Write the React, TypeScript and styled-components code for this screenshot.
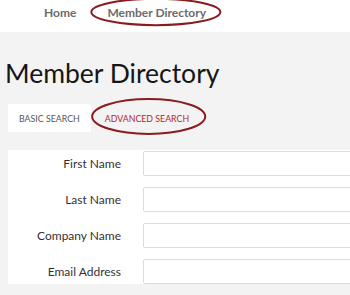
import React from "react";
import styled, { createGlobalStyle } from "styled-components";

const Global = createGlobalStyle`
  html, body { margin: 0; padding: 0; }
  body {
    font-family: Lato, "Open Sans", "Liberation Sans", sans-serif;
    background: #f3f3f3;
    overflow: hidden;
    width: 350px;
    height: 295px;
  }
`;

const Page = styled.div`
  width: 350px;
  height: 295px;
  overflow: hidden;
  background: #f3f3f3;
`;

const TopBar = styled.nav`
  height: 32px;
  background: #ffffff;
  display: flex;
  align-items: center;
  padding-left: 44px;
  gap: 31px;
  padding-bottom: 8px;
  box-sizing: border-box;
`;

const Crumb = styled.span`
  position: relative;
  font-size: 12px;
  font-weight: 700;
  color: #6b6b6b;
  white-space: nowrap;
`;

const Ring = styled.svg<{ $l: number; $r: number; $t: number; $b: number }>`
  position: absolute;
  left: ${(p) => -p.$l}px;
  top: ${(p) => -p.$t}px;
  width: calc(100% + ${(p) => p.$l + p.$r}px);
  height: calc(100% + ${(p) => p.$t + p.$b}px);
  overflow: visible;
  pointer-events: none;
`;

const Main = styled.main`
  padding: 26px 0 0 8px;
`;

const Title = styled.h1`
  margin: 0 0 14px -3px;
  font-size: 26.5px;
  font-weight: 400;
  line-height: 1.2;
  color: #161616;
  white-space: nowrap;
`;

const TabList = styled.div`
  display: flex;
  gap: 3px;
  height: 28px;
`;

const Tab = styled.div<{ $active?: boolean }>`
  position: relative;
  display: flex;
  align-items: center;
  padding: 1px 11px 0;
  font-size: 8.8px;
  text-transform: uppercase;
  white-space: nowrap;
  background: ${(p) => (p.$active ? "#ffffff" : "transparent")};
  color: ${(p) => (p.$active ? "#555555" : "#b3262b")};
  border-radius: 2px 2px 0 0;
`;

const TabText = styled.span`
  position: relative;
`;

const Panel = styled.form`
  margin-top: 18px;
  width: 420px;
  background: #ffffff;
  padding-top: 1px;
  display: grid;
  grid-template-columns: 113px 1fr;
  column-gap: 22px;
  row-gap: 11px;
  align-items: center;
`;

const Label = styled.label`
  text-align: right;
  font-size: 12px;
  color: #333333;
  white-space: nowrap;
`;

const Input = styled.input`
  height: 25px;
  box-sizing: border-box;
  border: 1px solid #dcdcdc;
  border-radius: 2px;
  background: #fff;
  margin: 0;
  padding: 0 6px;
  width: 100%;
  font-family: inherit;
`;

const Oval = ({ l, r, t, b }: { l: number; r: number; t: number; b: number }) => (
  <Ring $l={l} $r={r} $t={t} $b={b} viewBox="0 0 100 100" preserveAspectRatio="none">
    <ellipse
      cx="50"
      cy="50"
      rx="49"
      ry="47"
      fill="none"
      stroke="#8a1c1f"
      strokeWidth="2"
      vectorEffect="non-scaling-stroke"
    />
  </Ring>
);

const fields = ["First Name", "Last Name", "Company Name", "Email Address"];

export default function App() {
  return (
    <Page>
      <Global />
      <TopBar>
        <Crumb>Home</Crumb>
        <Crumb>
          Member Directory
          <Oval l={17} r={16} t={7} b={6} />
        </Crumb>
      </TopBar>
      <Main>
        <Title>Member Directory</Title>
        <TabList>
          <Tab $active>Basic Search</Tab>
          <Tab>
            <TabText>
              Advanced Search
              <Oval l={14} r={17} t={15} b={11} />
            </TabText>
          </Tab>
        </TabList>
        <Panel>
          {fields.map((f) => (
            <React.Fragment key={f}>
              <Label>{f}</Label>
              <Input type="text" />
            </React.Fragment>
          ))}
        </Panel>
      </Main>
    </Page>
  );
}
